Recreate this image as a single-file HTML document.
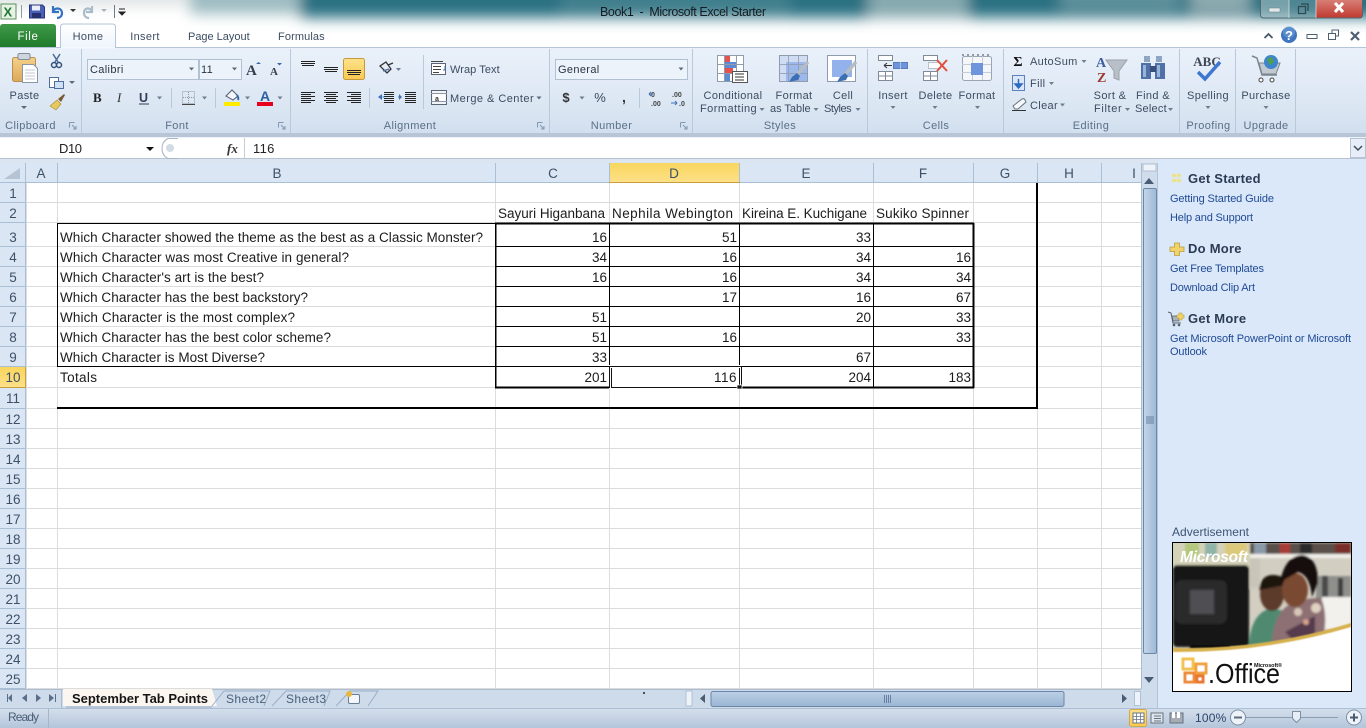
<!DOCTYPE html>
<html><head><meta charset="utf-8"><title>Book1 - Microsoft Excel Starter</title>
<style>
html,body{margin:0;padding:0;background:#fff;width:1366px;height:728px;overflow:hidden}
svg{display:block;font-family:"Liberation Sans",sans-serif}
.r{font-size:11px;fill:#3c4c60;letter-spacing:.35px}
.g{font-size:11px;fill:#5b6f88;letter-spacing:.4px;text-anchor:middle}
.c{font-size:13.5px;fill:#1c1c1c}
.n{font-size:13.5px;fill:#1c1c1c;text-anchor:end}
.h{font-size:13.5px;fill:#3d5068;text-anchor:middle}
.pt{font-size:13px;font-weight:bold;fill:#2c3b54;letter-spacing:.25px}
.pl{font-size:11px;fill:#1f4a96}
.tb{font-size:12px;fill:#4a5f78}
</style></head><body>
<svg width="1366" height="728" viewBox="0 0 1366 728" xmlns="http://www.w3.org/2000/svg">
<defs>
<filter id="b6" filterUnits="userSpaceOnUse" x="-60" y="-60" width="1500" height="130"><feGaussianBlur stdDeviation="7"/></filter>
<filter id="b1"><feGaussianBlur stdDeviation="1"/></filter>
<filter id="b05"><feGaussianBlur stdDeviation=".5"/></filter>
<linearGradient id="rib" x1="0" y1="0" x2="0" y2="1"><stop offset="0" stop-color="#eaf1fa"/><stop offset=".7" stop-color="#dbe6f3"/><stop offset="1" stop-color="#d0deee"/></linearGradient>
<linearGradient id="file" x1="0" y1="0" x2="0" y2="1"><stop offset="0" stop-color="#3f9a48"/><stop offset="1" stop-color="#1f7a2c"/></linearGradient>
<linearGradient id="tab" x1="0" y1="0" x2="0" y2="1"><stop offset="0" stop-color="#fff"/><stop offset="1" stop-color="#eef4fb"/></linearGradient>
<linearGradient id="yel" x1="0" y1="0" x2="0" y2="1"><stop offset="0" stop-color="#fde28a"/><stop offset="1" stop-color="#fbc94f"/></linearGradient>
<linearGradient id="hdy" x1="0" y1="0" x2="0" y2="1"><stop offset="0" stop-color="#f9d65d"/><stop offset="1" stop-color="#fde08a"/></linearGradient>
<linearGradient id="st" x1="0" y1="0" x2="0" y2="1"><stop offset="0" stop-color="#d5e0ed"/><stop offset="1" stop-color="#b4c5da"/></linearGradient>
<linearGradient id="thv" x1="0" y1="0" x2="1" y2="0"><stop offset="0" stop-color="#c5d6ea"/><stop offset="1" stop-color="#9db8d6"/></linearGradient>
<linearGradient id="thh" x1="0" y1="0" x2="0" y2="1"><stop offset="0" stop-color="#bcd0e6"/><stop offset="1" stop-color="#9ab5d3"/></linearGradient>
<linearGradient id="close" x1="0" y1="0" x2="0" y2="1"><stop offset="0" stop-color="#d9867d"/><stop offset="1" stop-color="#c0392f"/></linearGradient>
<linearGradient id="clip" x1="0" y1="0" x2="0" y2="1"><stop offset="0" stop-color="#f6d08a"/><stop offset="1" stop-color="#dba95a"/></linearGradient>
</defs>

<!-- title bar -->
<rect width="1366" height="47" fill="#fff"/>
<g filter="url(#b6)">
<rect x="-40" y="-40" width="240" height="46" fill="#dfe4e5"/>
<rect x="190" y="-40" width="120" height="54" fill="#9dbcc1"/>
<rect x="300" y="-40" width="1120" height="58" fill="#2c7182"/>
<rect x="560" y="-40" width="230" height="56" fill="#417f8d"/>
<rect x="868" y="-40" width="100" height="58" fill="#85a9af"/>
<rect x="1060" y="-40" width="120" height="50" fill="#5f929c"/>
<rect x="1190" y="-40" width="60" height="52" fill="#8dabb1"/>
</g>

<!-- QAT -->
<rect x="1" y="4" width="15" height="15" fill="#e8f2e4" stroke="#5d8f5f"/>
<text x="3.500" y="16.500" font-size="13" font-weight="bold" fill="#1d7a32">X</text>
<rect x="21" y="5" width="1" height="13" fill="#8b9aa3"/>
<path d="M29.500 5h13l2 2v11h-15z" fill="#4a5fb6" stroke="#2a3679"/><rect x="32" y="5.500" width="8" height="5" fill="#e9eefa"/><rect x="32" y="13" width="9" height="5" fill="#26306e"/>
<path d="M53 6v6h6M53 11c3-4 9-3 9 2 0 3-2 5-5 5" fill="none" stroke="#3573c2" stroke-width="2.200"/>
<path d="M70 9h6l-3 3z" fill="#333"/>
<path d="M92 6v6h-6M92 11c-3-4-8-3-8 2 0 3 2 5 5 5" fill="none" stroke="#a9bcc8" stroke-width="2.200"/>
<path d="M101 9h6l-3 3z" fill="#a9b3bc"/>
<rect x="114" y="5" width="1" height="13" fill="#6f7b84"/>
<path d="M119 9h6M119 12h6l-3 3z" stroke="#222" fill="#222"/>

<text x="600" y="16" font-size="12.500" fill="#141c22" textLength="166">Book1 &#160;-&#160; Microsoft Excel Starter</text>

<!-- window controls -->
<rect x="1261" y="-2" width="28" height="20" fill="#a9c2c6" fill-opacity=".6"/>
<rect x="1289" y="-2" width="27" height="20" fill="#6f9aa2" fill-opacity=".5"/>
<rect x="1316" y="-2" width="46" height="20" fill="url(#close)"/>
<rect x="1260.500" y="-3" width="102" height="21" rx="3" fill="none" stroke="#4f6a70"/>
<path d="M1289 0v18M1316 0v18" stroke="#dfe8ea" stroke-opacity=".7"/>
<rect x="1269" y="8" width="11" height="4" fill="#e3e9ea" stroke="#6f8a90" stroke-width=".6"/>
<path d="M1298.500 6.500h7v7h-7zM1301 4h7v7" fill="none" stroke="#2e4a52" stroke-width="1.300"/>
<path d="M1335 3l8 9M1343 3l-8 9" stroke="#fff" stroke-width="3"/>
<!-- app controls -->
<path d="M1264.500 38l4-4 4 4" fill="none" stroke="#47566a" stroke-width="1.800"/>
<circle cx="1289" cy="35" r="8" fill="#3f76bf"/><circle cx="1289" cy="32" r="6" fill="#7aa6dc" opacity=".5"/>
<text x="1289" y="40" font-size="13" font-weight="bold" fill="#fff" text-anchor="middle">?</text>
<rect x="1307" y="34.500" width="10" height="4" fill="#fff" stroke="#4f5f72"/>
<path d="M1328.500 33.500h7v6h-7zM1332 33v-3h6.500v6h-3" fill="#fff" stroke="#4f5f72"/>
<path d="M1351 32l8 8M1359 32l-8 8" stroke="#4f5f72" stroke-width="2.200"/>

<!-- tabs -->
<path d="M0 47V27q0-3 3-3h50q3 0 3 3v20z" fill="url(#file)"/>
<text x="28" y="40" font-size="11.500" fill="#fff" text-anchor="middle" letter-spacing=".6">File</text>
<path d="M60.500 48V27q0-3 3-3h49q3 0 3 3v21" fill="url(#tab)" stroke="#b4c5d9"/>
<text x="88" y="40" class="r" text-anchor="middle">Home</text>
<text x="145" y="40" class="r" text-anchor="middle">Insert</text>
<text x="188" y="40" class="r" textLength="62">Page Layout</text>
<text x="278" y="40" class="r" textLength="47">Formulas</text>

<!-- ribbon -->
<rect x="0" y="47" width="1366" height="88" fill="url(#rib)"/>
<rect x="0" y="47" width="1366" height="1" fill="#b4c5d9"/>
<rect x="61" y="47" width="54" height="1.500" fill="#f5f9fd"/>
<rect x="0" y="133" width="1366" height="4" fill="#b7c5d6"/>
<g fill="#b8c9dc"><rect x="81" y="49" width="1" height="84"/><rect x="290" y="49" width="1" height="84"/><rect x="549" y="49" width="1" height="84"/><rect x="692" y="49" width="1" height="84"/><rect x="867" y="49" width="1" height="84"/><rect x="1003" y="49" width="1" height="84"/><rect x="1179" y="49" width="1" height="84"/><rect x="1235" y="49" width="1" height="84"/><rect x="1295" y="49" width="1" height="84"/>
<rect x="171" y="88" width="1" height="20"/><rect x="215" y="88" width="1" height="20"/><rect x="369" y="88" width="1" height="20"/><rect x="423" y="55" width="1" height="54"/><rect x="639" y="88" width="1" height="20"/></g>

<!-- group labels -->
<text x="30.500" y="129" class="g">Clipboard</text>
<text x="177" y="129" class="g">Font</text>
<text x="410" y="129" class="g">Alignment</text>
<text x="611.500" y="129" class="g">Number</text>
<text x="780" y="129" class="g">Styles</text>
<text x="936" y="129" class="g">Cells</text>
<text x="1091" y="129" class="g">Editing</text>
<text x="1208.500" y="129" class="g">Proofing</text>
<text x="1266" y="129" class="g">Upgrade</text>
<!-- launchers -->
<g fill="none" stroke="#8297ad"><path d="M69.500 122.500h5M69.500 122.500v5M72 125l4 4M76 126v3h-3"/><path d="M278.500 122.500h5M278.500 122.500v5M281 125l4 4M285 126v3h-3"/><path d="M537.500 122.500h5M537.500 122.500v5M540 125l4 4M544 126v3h-3"/><path d="M680.500 122.500h5M680.500 122.500v5M683 125l4 4M687 126v3h-3"/></g>

<!-- clipboard icons -->
<rect x="12.500" y="57.500" width="23" height="24" rx="2" fill="url(#clip)" stroke="#b98f4e"/>
<rect x="18" y="53.500" width="12" height="6" rx="1.500" fill="#cfd5dc" stroke="#838c97"/>
<path d="M22.500 64.500h11l4 4v14h-15z" fill="#fff" stroke="#8a96a5"/>
<path d="M25 70h10M25 73h10M25 76h10M25 79h10" stroke="#c2cad4"/>
<text x="24.500" y="99" class="r" text-anchor="middle">Paste</text>
<path d="M21 106h6l-3 3z" fill="#5b6b7e"/>
<path d="M53 54l5 8M60 54l-5 8" stroke="#4f6a96" stroke-width="1.500"/><circle cx="54" cy="65" r="2.500" fill="none" stroke="#35507c" stroke-width="1.500"/><circle cx="59" cy="65" r="2.500" fill="none" stroke="#35507c" stroke-width="1.500"/>
<rect x="49.500" y="77.500" width="9" height="10" fill="#fff" stroke="#4d6d9c"/><rect x="54.500" y="81.500" width="9" height="7" fill="#cfe0f4" stroke="#4d6d9c"/>
<path d="M69 81h6l-3 3z" fill="#5b6b7e"/>
<path d="M50 106l7-6 4 4-5 6z" fill="#e8c95a" stroke="#a38a3a" stroke-width=".6"/><path d="M58 99l6-5 1 1-4 7z" fill="#7a5a34"/>

<!-- font -->
<rect x="87.500" y="59.500" width="111" height="20" fill="#edf3fa" stroke="#b1c1d4"/>
<rect x="199.500" y="59.500" width="42" height="20" fill="#edf3fa" stroke="#b1c1d4"/>
<text x="90" y="73" class="r" style="fill:#2a3442">Calibri</text>
<text x="201" y="73" class="r" style="fill:#2a3442">11</text>
<path d="M189 67.500h5l-2.500 3zM232 67.500h5l-2.500 3z" fill="#59697c"/>
<text x="246" y="75" font-size="15" font-weight="bold" font-family="Liberation Serif" fill="#333d4b">A</text><path d="M256 64l2.500-2 2.500 2z" fill="#3a66a8"/>
<text x="270" y="75" font-size="11" font-weight="bold" font-family="Liberation Serif" fill="#333d4b">A</text><path d="M277 63h5l-2.500 2.500z" fill="#3a66a8"/>
<text x="93" y="102" font-size="13" font-weight="bold" font-family="Liberation Serif" fill="#222">B</text>
<text x="117" y="102" font-size="13" font-style="italic" font-family="Liberation Serif" fill="#333">I</text>
<text x="139" y="102" font-size="12.500" font-weight="bold" fill="#333b55">U</text><rect x="139" y="103.500" width="10" height="1" fill="#333b55"/>
<path d="M157 96.500h5l-2.500 3zM202 96.500h5l-2.500 3zM245 96.500h5l-2.500 3zM277.500 96.500h5l-2.500 3z" fill="#6e7e91"/>
<rect x="182.500" y="91.500" width="12" height="12" fill="none" stroke="#8f99a6" stroke-dasharray="1 1"/><path d="M188.500 92v12M183 97.500h12" stroke="#8f99a6" stroke-dasharray="1 1"/><rect x="182" y="104" width="13" height="1" fill="#444"/>
<path d="M226 96l6-6 6 6-5 4z" fill="#f4f6f9" stroke="#4c5a70"/><path d="M237 95q2 3 1 5" stroke="#3067a8" stroke-width="2" fill="none"/>
<rect x="224" y="102" width="16" height="4" fill="#ffeb00"/>
<text x="265" y="101" font-size="14" font-weight="bold" fill="#2f5fa3" text-anchor="middle">A</text>
<rect x="257" y="102" width="16" height="4" fill="#e8001c"/>

<!-- align -->
<g stroke="#222" stroke-width="1"><path d="M301 61.500h14M301 63.500h14M302 65.500h12"/><path d="M324 67.500h14M324 69.500h14M325 71.500h12"/></g>
<rect x="343.500" y="58.500" width="21" height="21" rx="2" fill="url(#yel)" stroke="#c59a3c"/>
<path d="M347 70.500h14M347 72.500h14M348 74.500h12" stroke="#222"/>
<path d="M380 66l6-4 5 7-4 4zM388 65l5-2" fill="none" stroke="#333" stroke-width="1.300"/><path d="M383 71l6-2" stroke="#4b6f9f" stroke-width="1.300"/><path d="M396 68h5l-2.500 3z" fill="#6e7e91"/>
<g stroke="#222"><path d="M301 92.500h14M301 94.500h10M301 96.500h14M301 98.500h10M301 100.500h14M301 102.500h10"/><path d="M324 92.500h14M326 94.500h10M324 96.500h14M326 98.500h10M324 100.500h14M326 102.500h10"/><path d="M347 92.500h14M351 94.500h10M347 96.500h14M351 98.500h10M347 100.500h14M351 102.500h10"/>
<path d="M384 92.500h10M384 94.500h10M384 96.500h10M384 98.500h10M384 100.500h10M384 102.500h10"/><path d="M405 92.500h11M405 94.500h11M405 96.500h11M405 98.500h11M405 100.500h11M405 102.500h11"/></g>
<path d="M378 97l4-3v6zM402 97l-3-3v6z" fill="#3f70b5"/><path d="M382.500 97h2M398 97h2" stroke="#3f70b5"/>
<rect x="431.500" y="63.500" width="14" height="11" fill="#fff" stroke="#5a6674"/><path d="M431 61.500h12M433 66.500h8M433 69.500h8M433 72.500h6" stroke="#444"/><path d="M445 66v4h-2" stroke="#3f70b5" fill="none"/>
<text x="450" y="73" class="r" textLength="50">Wrap Text</text>
<rect x="431.500" y="90.500" width="15" height="14" fill="#f1f4f8" stroke="#5a6674"/><path d="M431 93.500h16M431 101.500h16" stroke="#8a95a3"/><rect x="433" y="94" width="12" height="7" fill="#fff"/>
<text x="435" y="101" font-size="7" font-weight="bold" fill="#333">a</text>
<text x="450" y="102" class="r" textLength="84">Merge &amp; Center</text>
<path d="M536.500 96.500h5l-2.500 3z" fill="#59697c"/>

<!-- number -->
<rect x="555.500" y="59.500" width="132" height="20" fill="#edf3fa" stroke="#b1c1d4"/>
<text x="558" y="73" class="r" style="fill:#2a3442">General</text>
<path d="M678.500 67.500h5l-2.500 3z" fill="#59697c"/>
<text x="566" y="102" font-size="13" font-weight="bold" fill="#333" text-anchor="middle">$</text>
<path d="M579.500 96.500h5l-2.500 3z" fill="#6e7e91"/>
<text x="600" y="102" font-size="13" fill="#3a4a5c" text-anchor="middle">%</text>
<text x="624" y="102" font-size="14" font-weight="bold" fill="#333" text-anchor="middle">,</text>
<text x="651" y="97" font-size="7" font-weight="bold" fill="#444">0</text><text x="651" y="106" font-size="7" font-weight="bold" fill="#444">.00</text><path d="M649 94h4M649 94l2-2M649 94l2 2" stroke="#3f70b5" fill="none"/>
<text x="672" y="97" font-size="7" font-weight="bold" fill="#444">.00</text><text x="679" y="106" font-size="7" font-weight="bold" fill="#444">.0</text><path d="M671 103h6M677 103l-2-2M677 103l-2 2" stroke="#3f70b5" fill="none"/>

<!-- styles -->
<rect x="717.500" y="55.500" width="26" height="26" fill="#fff" stroke="#8e9cae"/>
<rect x="724" y="56" width="6" height="9" fill="#e8504c"/><rect x="724" y="62" width="13" height="6" fill="#5d8ad6"/><rect x="724" y="68" width="9" height="6" fill="#e8504c"/><rect x="724" y="74" width="6" height="7" fill="#5d8ad6"/>
<path d="M717 64.500h26M717 73.500h26M724.500 55v26M736.500 55v26" stroke="#8e9cae" fill="none"/>
<rect x="732.500" y="71.500" width="15" height="11" fill="#fff" stroke="#555"/><path d="M735 74h9M735 77h9M735 80h9" stroke="#333"/>
<text x="733" y="99" class="r" text-anchor="middle">Conditional</text>
<text x="700" y="112" class="r" textLength="57">Formatting</text><path d="M759.500 108h5l-2.500 3z" fill="#6e7e91"/>
<rect x="779.500" y="55.500" width="28" height="26" fill="#cfdcf3" stroke="#8e9cae"/><rect x="786" y="62" width="21" height="19" fill="#9db8ea"/>
<path d="M779 64.500h28M779 73.500h28M788.500 55v26M798.500 55v26" stroke="#8e9cae" opacity=".8"/>
<path d="M808 62l-12 14" stroke="#b6bcc4" stroke-width="3.500"/><path d="M797 73l-5 4-3 5 9-2 2-4z" fill="#3d6fb3"/>
<text x="794" y="99" class="r" text-anchor="middle">Format</text>
<text x="770" y="112" class="r" textLength="41">as Table</text><path d="M813.500 108h5l-2.500 3z" fill="#6e7e91"/>
<rect x="827.500" y="55.500" width="28" height="26" fill="#fff" stroke="#8e9cae"/><rect x="832" y="60" width="20" height="17" fill="#93b1ea"/>
<path d="M856 62l-12 14" stroke="#b6bcc4" stroke-width="3.500"/><path d="M845 73l-5 4-3 5 9-2 2-4z" fill="#3d6fb3"/>
<text x="843" y="99" class="r" text-anchor="middle">Cell</text>
<text x="824" y="112" class="r" textLength="28">Styles</text><path d="M855.500 108h5l-2.500 3z" fill="#6e7e91"/>

<!-- cells -->
<g fill="#fff" stroke="#7f8b99"><rect x="878.500" y="55.500" width="14" height="5"/><rect x="878.500" y="71.500" width="14" height="9"/><rect x="923.500" y="55.500" width="14" height="5"/><rect x="923.500" y="71.500" width="14" height="9"/></g>
<path d="M885.500 71v10M878 76h15M930.500 71v10M923 76h15" stroke="#7f8b99"/>
<rect x="893.500" y="62.500" width="14" height="6" fill="#6e94dc" stroke="#5a7cbc"/><path d="M900.500 62v7" stroke="#a9c2ec"/>
<path d="M884 65.500h8M884 65.500l3-2.500M884 65.500l3 2.500" stroke="#333" fill="none"/>
<rect x="928.500" y="62.500" width="12" height="6" fill="#fff" stroke="#7f8b99" stroke-dasharray="1 1"/>
<path d="M937 60l10 11M947 60l-10 11" stroke="#e0503c" stroke-width="2"/>
<rect x="962.500" y="56.500" width="29" height="24" rx="2" fill="#f4f6f9" stroke="#9aa6b4"/>
<path d="M972.500 56v24M982.500 56v24M962 64.500h29M962 72.500h29" stroke="#c5ccd6"/><rect x="971" y="63" width="12" height="12" fill="#6e94dc"/>
<path d="M962 55h30" stroke="#444" stroke-dasharray="2 3"/>
<text x="893" y="99" class="r" text-anchor="middle">Insert</text><path d="M890.500 106h5l-2.500 3z" fill="#6e7e91"/>
<text x="935.500" y="99" class="r" text-anchor="middle">Delete</text><path d="M932.500 106h5l-2.500 3z" fill="#6e7e91"/>
<text x="977" y="99" class="r" text-anchor="middle">Format</text><path d="M975 106h5l-2.500 3z" fill="#6e7e91"/>

<!-- editing -->
<text x="1018" y="66" font-size="14" font-weight="bold" font-family="Liberation Serif" fill="#111" text-anchor="middle">Σ</text>
<text x="1030" y="65" class="r">AutoSum</text><path d="M1081.500 60h5l-2.500 3z" fill="#6e7e91"/>
<rect x="1012.500" y="75.500" width="12" height="15" fill="#dbe7f7" stroke="#5a82bc"/><path d="M1018.500 79v7M1015 84l3.500 4 3.500-4z" stroke="#2f6ac0" fill="#2f6ac0" stroke-width="1.500"/>
<text x="1030" y="87" class="r">Fill</text><path d="M1049 82h5l-2.500 3z" fill="#6e7e91"/>
<path d="M1013 106l9-7q2-1 3 1l1 2-8 7h-3z" fill="#f6f8fb" stroke="#66717e"/><rect x="1012" y="110" width="14" height="1" fill="#333"/>
<text x="1030" y="109" class="r">Clear</text><path d="M1060 103.500h5l-2.500 3z" fill="#6e7e91"/>
<text x="1096" y="67" font-size="14" font-weight="bold" font-family="Liberation Serif" fill="#3c5ea0">A</text>
<text x="1097" y="82" font-size="14" font-weight="bold" font-family="Liberation Serif" fill="#9c3a30">Z</text>
<path d="M1106 60h21l-8 11v9l-5-2v-7z" fill="#b9bfc6" stroke="#9aa1aa"/>
<text x="1110" y="99" class="r" text-anchor="middle">Sort &amp;</text>
<text x="1094" y="112" class="r" textLength="28">Filter</text><path d="M1125 108h5l-2.500 3z" fill="#6e7e91"/>
<path d="M1144 56h6v6h-6zM1156 56h6v6h-6z" fill="#8ea5c4"/><path d="M1141 63h10v16h-10zM1155 63h10v16h-10z" fill="#4f70a8"/><rect x="1150" y="66" width="6" height="6" fill="#38517c"/><path d="M1143 65h3v12h-3zM1157 65h3v12h-3z" fill="#9ab4d8"/>
<text x="1153" y="99" class="r" text-anchor="middle">Find &amp;</text>
<text x="1135" y="112" class="r" textLength="32">Select</text><path d="M1168 108h5l-2.500 3z" fill="#6e7e91"/>

<!-- proofing / upgrade -->
<text x="1207" y="66" font-size="13" font-weight="bold" font-family="Liberation Serif" fill="#3d4654" text-anchor="middle">ABC</text>
<path d="M1198 72l7 7 15-17" fill="none" stroke="#3f76cf" stroke-width="3.500"/>
<text x="1208" y="99" class="r" text-anchor="middle">Spelling</text><path d="M1205.500 106h5l-2.500 3z" fill="#6e7e91"/>
<path d="M1252 56l5 2 5 17h15" fill="none" stroke="#7b8590" stroke-width="1.500"/><path d="M1259 63h21l-4 11h-14z" fill="#c2c8cf" stroke="#7b8590"/><circle cx="1271" cy="62" r="7" fill="#3e85cc"/><path d="M1267 59l5-2 2 5-4 3z" fill="#4fa04a"/>
<circle cx="1261" cy="80" r="2" fill="#fff" stroke="#444"/><circle cx="1272" cy="80" r="2" fill="#fff" stroke="#444"/>
<text x="1266" y="99" class="r" text-anchor="middle">Purchase</text><path d="M1263.500 106h5l-2.500 3z" fill="#6e7e91"/>

<!-- formula bar -->
<rect x="0" y="137" width="1366" height="27" fill="#dbe5f1"/>
<rect x="0" y="137.500" width="1366" height="21" fill="#fff"/>
<rect x="0" y="158" width="1366" height="1" fill="#b7c3d0"/>
<text x="59" y="153" font-size="13" fill="#222" textLength="23">D10</text>
<path d="M146 147h8l-4 4z" fill="#111"/>
<path d="M178 138.500h-10q-6 3-6 10t6 10h10" fill="#fff" stroke="#a9b6c5"/><circle cx="170" cy="148" r="4" fill="#d3dbe4"/>
<text x="227" y="153" font-size="13" font-style="italic" font-weight="bold" font-family="Liberation Serif" fill="#333">fx</text>
<rect x="244" y="138" width="1" height="20" fill="#c5ced8"/>
<text x="253" y="153" font-size="13" fill="#222" letter-spacing=".3">116</text>
<rect x="1350.500" y="138.500" width="15" height="19" fill="#e7eef7" stroke="#b7c3d0"/>
<path d="M1354 146l4 4 4-4" fill="none" stroke="#3e4c5e" stroke-width="1.500"/>

<!-- sheet -->
<rect x="0" y="163" width="1158" height="526" fill="#fff"/>
<rect x="0" y="163" width="1141" height="20" fill="#dbe6f4"/>
<rect x="0" y="183" width="26" height="506" fill="#dbe6f4"/>
<rect x="609" y="163" width="131" height="20" fill="url(#hdy)"/>
<rect x="0" y="367" width="26" height="21" fill="url(#hdy)"/>
<path d="M4 179h16V168z" fill="#b5c4d4"/>
<g stroke="#dcdcdc" fill="none">
<path d="M26.500 183V689M57.500 183V689M495.500 183V689M609.500 183V689M739.500 183V689M873.500 183V689M973.500 183V689M1037.500 183V689M1101.500 183V689"/>
<path d="M26 202.500H1141M26 222.500H1141M26 246.500H1141M26 266.500H1141M26 286.500H1141M26 306.500H1141M26 326.500H1141M26 346.500H1141M26 366.500H1141M26 387.500H1141M26 408.500H1141M26 428.500H1141M26 448.500H1141M26 468.500H1141M26 488.500H1141M26 508.500H1141M26 528.500H1141M26 548.500H1141M26 568.500H1141M26 588.500H1141M26 608.500H1141M26 628.500H1141M26 648.500H1141M26 668.500H1141M26 688.500H1141"/>
</g>
<g stroke="#a9bfd6" fill="none">
<path d="M25.500 163V689M57.500 163V183M495.500 163V183M609.500 163V183M739.500 163V183M873.500 163V183M973.500 163V183M1037.500 163V183M1101.500 163V183"/>
<path d="M0 182.500H1141M0 202.500H26M0 222.500H26M0 246.500H26M0 266.500H26M0 286.500H26M0 306.500H26M0 326.500H26M0 346.500H26M0 366.500H26M0 387.500H26M0 408.500H26M0 428.500H26M0 448.500H26M0 468.500H26M0 488.500H26M0 508.500H26M0 528.500H26M0 548.500H26M0 568.500H26M0 588.500H26M0 608.500H26M0 628.500H26M0 648.500H26M0 668.500H26M0 688.500H26"/>
</g>
<rect x="609" y="182" width="131" height="1" fill="#c79f3e"/><rect x="25" y="367" width="1" height="21" fill="#c79f3e"/><rect x="0" y="387" width="26" height="1" fill="#c79f3e"/>

<g>
<text x="41" y="178" class="h">A</text><text x="277" y="178" class="h">B</text><text x="553" y="178" class="h">C</text><text x="674" y="178" class="h">D</text><text x="806" y="178" class="h">E</text><text x="923" y="178" class="h">F</text><text x="1005" y="178" class="h">G</text><text x="1069" y="178" class="h">H</text><text x="1134" y="178" class="h">I</text>
<text x="13" y="198" class="h">1</text><text x="13" y="218" class="h">2</text><text x="13" y="242" class="h">3</text><text x="13" y="262" class="h">4</text><text x="13" y="282" class="h">5</text><text x="13" y="302" class="h">6</text><text x="13" y="322" class="h">7</text><text x="13" y="342" class="h">8</text><text x="13" y="362" class="h">9</text><text x="13" y="382" class="h">10</text><text x="13" y="403" class="h">11</text><text x="13" y="424" class="h">12</text><text x="13" y="444" class="h">13</text><text x="13" y="464" class="h">14</text><text x="13" y="484" class="h">15</text><text x="13" y="504" class="h">16</text><text x="13" y="524" class="h">17</text><text x="13" y="544" class="h">18</text><text x="13" y="564" class="h">19</text><text x="13" y="584" class="h">20</text><text x="13" y="604" class="h">21</text><text x="13" y="624" class="h">22</text><text x="13" y="644" class="h">23</text><text x="13" y="664" class="h">24</text><text x="13" y="684" class="h">25</text>
</g>

<!-- black borders -->
<g fill="#000">
<rect x="57" y="223" width="438" height="1"/><rect x="57" y="223" width="1" height="144"/><rect x="57" y="366" width="916" height="1"/>
<rect x="495" y="222.500" width="479" height="2"/><rect x="495" y="223" width="1.500" height="165"/><rect x="972.500" y="223" width="2" height="165"/><rect x="495" y="386.500" width="479" height="2"/>
<rect x="609" y="223" width="1" height="165"/><rect x="739" y="223" width="1" height="165"/><rect x="873" y="223" width="1" height="165"/>
<rect x="496" y="246" width="477" height="1"/><rect x="496" y="266" width="477" height="1"/><rect x="496" y="286" width="477" height="1"/><rect x="496" y="306" width="477" height="1"/><rect x="496" y="326" width="477" height="1"/><rect x="496" y="346" width="477" height="1"/>
<rect x="1036" y="183" width="2" height="226"/><rect x="57" y="407" width="981" height="2"/>
</g>
<!-- active cell -->
<rect x="609" y="365" width="133" height="24" fill="#fff"/>
<g fill="#111">
<rect x="609" y="366" width="1" height="22"/><rect x="611" y="368" width="1" height="19"/>
<rect x="739" y="368" width="1" height="19"/><rect x="741" y="366" width="1" height="22"/>
<rect x="609" y="366" width="133" height="1"/><rect x="611" y="387" width="129" height="1"/>
</g>
<rect x="737" y="385" width="5" height="4" fill="#111" stroke="#fff" stroke-width=".7"/>

<g>
<text x="498" y="218" class="c" textLength="107">Sayuri Higanbana</text>
<text x="612" y="218" class="c" textLength="121">Nephila Webington</text>
<text x="742" y="218" class="c" textLength="125">Kireina E. Kuchigane</text>
<text x="876" y="218" class="c" textLength="93">Sukiko Spinner</text>
<text x="60" y="242" class="c" textLength="423">Which Character showed the theme as the best as a Classic Monster?</text>
<text x="60" y="262" class="c" textLength="289">Which Character was most Creative in general?</text>
<text x="60" y="282" class="c" textLength="204">Which Character's art is the best?</text>
<text x="60" y="302" class="c" textLength="248">Which Character has the best backstory?</text>
<text x="60" y="322" class="c" textLength="235">Which Character is the most complex?</text>
<text x="60" y="342" class="c" textLength="271">Which Character has the best color scheme?</text>
<text x="60" y="362" class="c" textLength="205">Which Character is Most Diverse?</text>
<text x="60" y="382" class="c" textLength="37">Totals</text>
<text x="607" y="242" class="n">16</text><text x="737" y="242" class="n">51</text><text x="871" y="242" class="n">33</text>
<text x="607" y="262" class="n">34</text><text x="737" y="262" class="n">16</text><text x="871" y="262" class="n">34</text><text x="971" y="262" class="n">16</text>
<text x="607" y="282" class="n">16</text><text x="737" y="282" class="n">16</text><text x="871" y="282" class="n">34</text><text x="971" y="282" class="n">34</text>
<text x="737" y="302" class="n">17</text><text x="871" y="302" class="n">16</text><text x="971" y="302" class="n">67</text>
<text x="607" y="322" class="n">51</text><text x="871" y="322" class="n">20</text><text x="971" y="322" class="n">33</text>
<text x="607" y="342" class="n">51</text><text x="737" y="342" class="n">16</text><text x="971" y="342" class="n">33</text>
<text x="607" y="362" class="n">33</text><text x="871" y="362" class="n">67</text>
<text x="607" y="382" class="n">201</text><text x="737" y="382" class="n" letter-spacing=".5">116</text><text x="871" y="382" class="n">204</text><text x="971" y="382" class="n">183</text>
</g>

<!-- vertical scrollbar -->
<rect x="1141" y="163" width="17" height="545" fill="#cfdcec"/>
<rect x="1141" y="163" width="1" height="526" fill="#a9bcd2"/><rect x="1157" y="163" width="1" height="545" fill="#b4c4d6"/>
<rect x="1143" y="164" width="13" height="7" fill="#eef3f9" stroke="#b1c1d3"/>
<path d="M1144 184l5-6 5 6z" fill="#4a5c74"/>
<rect x="1143.500" y="188.500" width="13" height="465" rx="1.500" fill="url(#thv)" stroke="#6b86a6"/>
<path d="M1146 417h8M1146 419h8M1146 421h8M1146 423h8" stroke="#68809f"/>
<path d="M1144 677l5 6 5-6z" fill="#4a5c74"/>

<!-- tabs bar & hscroll -->
<rect x="0" y="689" width="1141" height="19" fill="#cddbeb"/>
<rect x="0" y="689" width="1141" height="1" fill="#a9bcd2"/>
<path d="M12 694v8l-4-4zM7 694h1v8H7zM27 694v8l-5-4zM36 694v8l5-4zM49 694v8l5-4zM55 694h1v8h-1z" fill="#5a6e88"/>
<rect x="61" y="690" width="1" height="18" fill="#a9bcd2"/>
<path d="M63 689h149l5 17H63z" fill="#fbf7f0"/>
<path d="M66 707h146" stroke="#9fb1c6" fill="none"/>
<text x="72" y="703" font-size="13" font-weight="bold" fill="#151515" textLength="136">September Tab Points</text>
<path d="M212 706l12-15h46l-6 15M272 706l14-15h44l-6 15M336 706l14-15h28l-10 15" fill="none" stroke="#9aaec6"/>
<text x="226" y="703" class="tb" textLength="40">Sheet2</text>
<text x="286" y="703" class="tb" textLength="40">Sheet3</text>
<rect x="348.500" y="694.500" width="11" height="9" rx="1.500" fill="#f3f7fb" stroke="#6c7d92"/>
<circle cx="349" cy="694" r="3" fill="#e8b83c"/>
<circle cx="644" cy="693" r="1" fill="#222"/>
<rect x="686" y="691" width="6" height="15" fill="#eef3f9" stroke="#b1c1d3"/>
<path d="M705 694v9l-5-4.500z" fill="#4a5c74"/>
<rect x="711" y="691.500" width="353" height="15" rx="2" fill="url(#thh)" stroke="#6b86a6"/>
<path d="M884.500 695v8M886.500 695v8M888.500 695v8M890.500 695v8" stroke="#68809f"/>
<path d="M1122 694v9l5-4.500z" fill="#4a5c74"/>
<rect x="1134.500" y="691.500" width="6" height="14" fill="#eef3f9" stroke="#b1c1d3"/>

<!-- status -->
<rect x="0" y="708" width="1366" height="20" fill="url(#st)"/>
<rect x="0" y="708" width="1366" height="1" fill="#aebfd3"/>
<text x="8" y="721" class="tb" textLength="31">Ready</text>
<rect x="48" y="709" width="1" height="19" fill="#a5b6ca"/>
<rect x="1129.500" y="709.500" width="17" height="17" rx="2" fill="url(#yel)" stroke="#d3a74a"/>
<rect x="1133" y="713" width="11" height="10" fill="#fff" stroke="#6a7685"/><path d="M1133 716.500h11M1133 719.500h11M1136.500 713v10M1140.500 713v10" stroke="#6a7685" stroke-width=".8"/>
<rect x="1151" y="713" width="12" height="10" fill="#e0e6ee" stroke="#66717e"/><path d="M1154 716h7M1154 718.500h7M1154 721h7" stroke="#66717e"/>
<rect x="1170" y="713" width="13" height="10" fill="#a6acb4" stroke="#66717e"/><rect x="1172" y="712" width="3" height="6" fill="#fff"/><rect x="1177" y="712" width="3" height="6" fill="#fff"/>
<text x="1195" y="722" font-size="12" fill="#2c4568" letter-spacing=".2">100%</text>
<path d="M1246 717.500h92" stroke="#8c9db1"/>
<circle cx="1238" cy="717.500" r="7.500" fill="#eef3f9" stroke="#7d8fa5"/><rect x="1234" y="716.500" width="8" height="2" fill="#5b6c80"/>
<circle cx="1354" cy="717.500" r="7.500" fill="#eef3f9" stroke="#7d8fa5"/><path d="M1350 717.500h8M1354 713.500v8" stroke="#4b5b70" stroke-width="2"/>
<path d="M1292.500 711.500h8v7l-4 4-4-4z" fill="#e7edf4" stroke="#7d8fa5"/>

<!-- task pane -->
<rect x="1158" y="159" width="208" height="549" fill="#dbe8f9"/>
<g fill="#efe07a" filter="url(#b05)"><path d="M1172 174h4v3h-4zM1177 174h4v3h-4zM1172 179h4v3h-4zM1177 179h4v3h-4z"/></g>
<text x="1188" y="183" class="pt">Get Started</text>
<text x="1170" y="202" class="pl" textLength="104">Getting Started Guide</text>
<text x="1170" y="221" class="pl" textLength="83">Help and Support</text>
<path d="M1174.500 243h5v4h4.500v4.500h-4.500v4h-5v-4H1170V247h4.500z" fill="#f2d36a" stroke="#b89c3e" stroke-width=".8"/>
<text x="1188" y="253" class="pt">Do More</text>
<text x="1170" y="272" class="pl" textLength="94">Get Free Templates</text>
<text x="1170" y="291" class="pl" textLength="85">Download Clip Art</text>
<path d="M1168 312l3 1 2 10h8" fill="none" stroke="#55606e"/><path d="M1172 316h7v5h-6z" fill="#a9b2bd" stroke="#55606e" stroke-width=".7"/><path d="M1179 313h3v2h2v3h-2v2h-3v-2h-2v-3h2z" fill="#f2d36a" stroke="#b89c3e" stroke-width=".6"/><circle cx="1174" cy="325" r="1.300" fill="#55606e"/><circle cx="1179" cy="325" r="1.300" fill="#55606e"/>
<text x="1188" y="323" class="pt">Get More</text>
<text x="1170" y="342" class="pl" textLength="181">Get Microsoft PowerPoint or Microsoft</text>
<text x="1170" y="355" class="pl" textLength="37">Outlook</text>
<text x="1172" y="536" font-size="12" fill="#3e5472" textLength="77">Advertisement</text>

<!-- ad -->
<rect x="1172.500" y="542.500" width="179" height="149" fill="#fff" stroke="#000"/>
<svg x="1173" y="543" width="178" height="148" viewBox="1173 543 178 148">
<rect x="1173" y="543" width="178" height="110" fill="#d2cec2"/>
<g filter="url(#b1)">
<rect x="1173" y="543" width="78" height="24" fill="#d4d3b8"/><rect x="1185" y="543" width="14" height="14" fill="#b4c77c"/><rect x="1205" y="543" width="12" height="14" fill="#8fb4a8"/><rect x="1225" y="543" width="22" height="14" fill="#dcc97a"/>
<rect x="1250" y="543" width="101" height="11" fill="#5a4f48"/><rect x="1254" y="543" width="12" height="11" fill="#8a9aa8"/><rect x="1280" y="543" width="10" height="11" fill="#a93c34"/><rect x="1300" y="543" width="12" height="11" fill="#2a2a2a"/><rect x="1335" y="543" width="16" height="10" fill="#7a2d2a"/>
<rect x="1250" y="554" width="101" height="4" fill="#f1efe8"/>
<rect x="1250" y="558" width="10" height="30" fill="#c9c5b8"/>
<rect x="1316" y="576" width="35" height="24" fill="#8f8f8c"/><rect x="1322" y="576" width="6" height="24" fill="#4a4a4a"/><rect x="1338" y="578" width="5" height="22" fill="#3e3e3e"/>
<rect x="1322" y="597" width="29" height="32" fill="#f3f1ec"/>
<rect x="1173" y="565" width="76" height="82" rx="4" fill="#131315"/>
<rect x="1175" y="580" width="52" height="44" rx="7" fill="#2a2a2c"/>
<rect x="1190" y="590" width="24" height="24" fill="#4f5052"/>
<rect x="1190" y="645" width="40" height="6" fill="#101010"/>
<path d="M1249 649q0-35 22-41l18 4-4 38z" fill="#4f8a70"/>
<ellipse cx="1272" cy="594" rx="12" ry="17" fill="#5c3a2a"/><path d="M1259 590q2-16 15-15t12 10z" fill="#1f1510"/>
<path d="M1272 642q2-34 24-40 10-4 25-4 8 18 1 44z" fill="#8c6f73"/>
<path d="M1285 632l30-16v18l-20 8z" fill="#553a4d"/><circle cx="1316" cy="608" r="5" fill="#e0d2c0"/><circle cx="1298" cy="612" r="4" fill="#d9c8b8"/><circle cx="1306" cy="622" r="3" fill="#d6a28c"/>
<ellipse cx="1295" cy="590" rx="13" ry="17" fill="#7a4a30"/>
<path d="M1280 582q5-26 22-27 16 2 16 28l-6 14q-2-22-14-25-10 6-18 10z" fill="#151010"/>
</g>
<path d="M1173 650q90 2 178-25v66H1173z" fill="#fff"/>
<path d="M1173 648q90 2 178-25v4q-88 26-178 25z" fill="#d6b14e" filter="url(#b05)"/>
<g filter="url(#b05)">
<path d="M1183 659h10v10h-10z" fill="#fff" stroke="#f3c14a" stroke-width="3"/>
<path d="M1196 664h10v9h-10z" fill="#fff" stroke="#f0a13c" stroke-width="3"/>
<path d="M1185 673h9v9h-9z" fill="#fff" stroke="#ee8a34" stroke-width="3"/>
<path d="M1197 676h6v6h-6z" fill="#fff" stroke="#e8762c" stroke-width="3"/>
</g>
<text x="1180" y="562" font-size="15.500" font-weight="bold" font-style="italic" fill="#fff" textLength="68">Microsoft</text>
<text x="1208" y="683" font-size="28" fill="#111" textLength="72" lengthAdjust="spacingAndGlyphs">.Office</text>
<text x="1254" y="667" font-size="5.500" font-weight="bold" fill="#111" textLength="28">Microsoft®</text>
</svg>
</svg>
</body></html>
